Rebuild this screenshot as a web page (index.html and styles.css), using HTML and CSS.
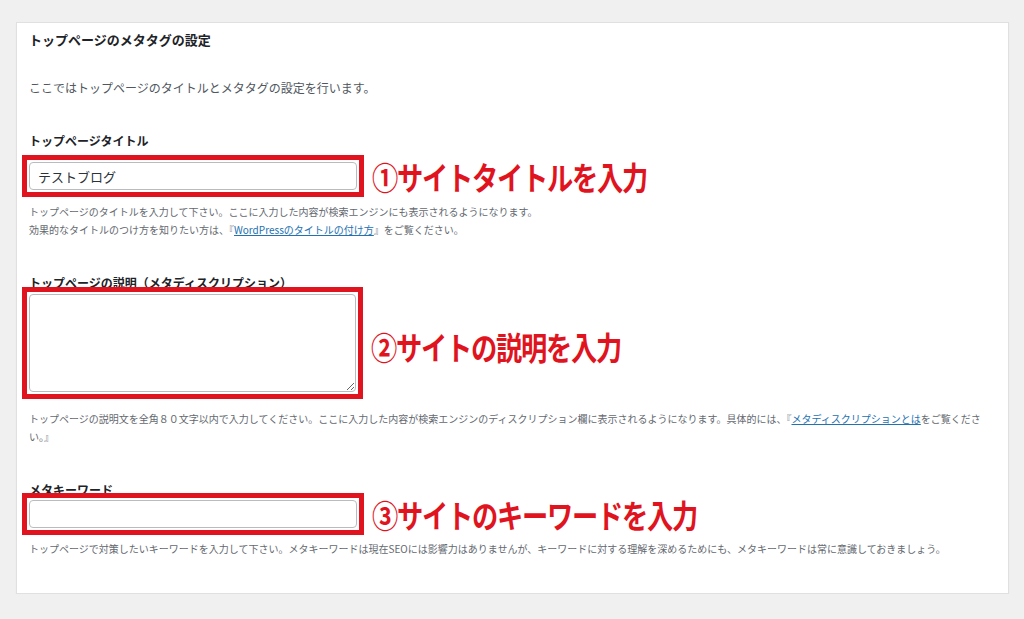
FILE: index.html
```html
<!DOCTYPE html>
<html lang="ja">
<head>
<meta charset="utf-8">
<title>トップページのメタタグの設定</title>
<link rel="stylesheet" href="styles.css">
</head>
<body>
<div class="panel">
  <h2 class="heading">トップページのメタタグの設定</h2>
  <p class="intro">ここではトップページのタイトルとメタタグの設定を行います。</p>

  <label class="label label-first">トップページタイトル</label>
  <div class="row">
    <span class="frame"><input class="field" type="text" value="テストブログ"></span>
    <span class="note">①サイトタイトルを入力</span>
  </div>
  <p class="desc desc-first">トップページのタイトルを入力して下さい。ここに入力した内容が検索エンジンにも表示されるようになります。<br>効果的なタイトルのつけ方を知りたい方は、『<a href="#">WordPressのタイトルの付け方</a>』をご覧ください。</p>

  <label class="label label-second">トップページの説明（メタディスクリプション）</label>
  <div class="row">
    <span class="frame"><textarea class="field area"></textarea></span>
    <span class="note note-area">②サイトの説明を入力</span>
  </div>
  <p class="desc desc-second">トップページの説明文を全角８０文字以内で入力してください。ここに入力した内容が検索エンジンのディスクリプション欄に表示されるようになります。具体的には、『<a href="#">メタディスクリプションとは</a>をご覧ください。』</p>

  <label class="label label-third">メタキーワード</label>
  <div class="row">
    <span class="frame"><input class="field" type="text" value=""></span>
    <span class="note">③サイトのキーワードを入力</span>
  </div>
  <p class="desc desc-third">トップページで対策したいキーワードを入力して下さい。メタキーワードは現在SEOには影響力はありませんが、キーワードに対する理解を深めるためにも、メタキーワードは常に意識しておきましょう。</p>
</div>
</body>
</html>
```

FILE: styles.css
```css
html, body {
  margin: 0;
  padding: 0;
  background: #f0f0f1;
  font-family: "Noto Sans CJK JP", "Noto Sans", sans-serif;
}

.panel {
  margin: 22px 0 0 16px;
  width: 967px;
  box-sizing: content-box;
  background: #fff;
  border: 1px solid #e0e0e2;
  box-shadow: 0 1px 1px rgba(0, 0, 0, 0.05);
  padding: 7px 12px 35px 12px;
}

.heading {
  margin: 0;
  font-size: 13px;
  line-height: 20px;
  font-weight: 700;
  color: #1d2327;
}

.intro {
  margin: 28px 0 0;
  font-size: 12px;
  line-height: 20px;
  color: #50575e;
}

.label {
  display: block;
  font-size: 12px;
  line-height: 20px;
  font-weight: 700;
  color: #1d2327;
}

.label-first { margin-top: 33px; margin-bottom: 11px; }
.label-second { margin-top: 34px; margin-bottom: 1px; }
.label-third { margin-top: 34px; margin-bottom: 0; }

.row {
  display: flex;
  align-items: center;
  gap: 15px;
}

.frame {
  display: block;
  margin: -7px;
  padding: 2px;
  border: 5px solid #e0141e;
  flex: none;
}

.field {
  display: block;
  box-sizing: border-box;
  width: 328px;
  height: 28px;
  margin: 0;
  padding: 0 8px;
  border: 1px solid #b9bbbe;
  border-radius: 4px;
  background: #fff;
  font-family: "Noto Sans CJK JP", sans-serif;
  font-size: 13px;
  color: #2c3338;
  outline: none;
}

.area {
  height: 98px;
  width: 327px;
  padding: 6px 8px;
  resize: both;
}

.note {
  display: inline-block;
  font-size: 32px;
  line-height: 28px;
  font-weight: 700;
  letter-spacing: -1.5px;
  color: #e0141e;
  white-space: nowrap;
  transform: scaleX(0.82);
  transform-origin: left center;
}

.note-area {
  margin-top: 6px;
}

.desc {
  margin: 0;
  font-size: 10px;
  line-height: 18px;
  color: #646970;
}

.desc a {
  color: #2271b1;
  text-decoration: underline;
}

.desc-first { margin-top: 13px; }
.desc-second { margin-top: 18px; }
.desc-third { margin-top: 12px; }
```
